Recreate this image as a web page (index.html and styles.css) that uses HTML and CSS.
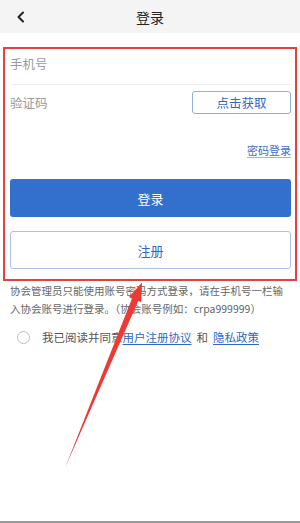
FILE: index.html
```html
<!DOCTYPE html>
<html lang="zh-CN">
<head>
<meta charset="utf-8">
<title>登录</title>
<link rel="stylesheet" href="styles.css">
</head>
<body>
<header class="topbar">
  <span class="back">
    <svg width="10" height="12" viewBox="0 0 10 12"><polyline points="7,1.5 2.5,6 7,10.5" fill="none" stroke="#222" stroke-width="2" stroke-linecap="round" stroke-linejoin="round"/></svg>
  </span>
  <h1 class="title">登录</h1>
  <span></span>
</header>

<section class="form">
  <div class="field phone">手机号</div>
  <div class="divider"></div>
  <div class="field code">
    <span>验证码</span>
    <button class="get-code">点击获取</button>
  </div>
  <div class="switch"><a class="pwd-link">密码登录</a></div>
  <button class="btn primary">登录</button>
  <button class="btn outline">注册</button>
</section>

<p class="note">协会管理员只能使用账号密码方式登录，请在手机号一栏输入协会账号进行登录。（协会账号例如：crpa999999）</p>

<div class="agree">
  <span class="radio"></span>
  <span class="agree-text">我已阅读并同意<a class="link">用户注册协议</a><span class="and">和</span><a class="link">隐私政策</a></span>
</div>

<div class="bottom-line"></div>

<svg class="arrow" width="300" height="523" viewBox="0 0 300 523">
  <polygon points="142,282.5 141.2,302.2 138.2,300.9 65,468 132,298.5 129,297" fill="#ec3a35"/>
</svg>
</body>
</html>
```

FILE: styles.css
```css
* { box-sizing: border-box; }
html, body { margin: 0; padding: 0; }
body {
  width: 300px;
  min-height: 523px;
  background: #fff;
  font-family: "Noto Sans CJK SC", "Noto Sans", sans-serif;
  display: flex;
  flex-direction: column;
  position: relative;
  overflow: hidden;
}
.topbar {
  height: 33px;
  background: #f4f4f4;
  display: grid;
  grid-template-columns: 40px 1fr 40px;
  align-items: center;
}
.back {
  display: flex;
  justify-content: center;
  align-items: center;
  padding-left: 2px;
}
.back svg { display: block; }
.title {
  margin: 0;
  text-align: center;
  font-size: 14px;
  font-weight: 400;
  color: #222;
  line-height: 20px;
}
.form {
  margin: 14px 0 0 3px;
  width: 294px;
  border: 2px solid #e8403c;
  padding: 0 4px 10px 5px;
  display: flex;
  flex-direction: column;
}
.field {
  font-size: 12.5px;
  color: #9a9a9a;
  line-height: 20px;
}
.phone { padding: 5px 0 10px; }
.divider {
  height: 1px;
  background: #eeeeee;
  margin: 0 0 0 2px;
}
.code {
  display: flex;
  justify-content: space-between;
  align-items: center;
  padding-top: 6px;
}
.get-code {
  width: 99px;
  height: 23px;
  border: 1px solid #8fb0e0;
  border-radius: 3px;
  background: #fff;
  color: #2f68c4;
  font-family: inherit;
  font-size: 12.5px;
  padding: 0;
  line-height: 21px;
}
.switch {
  display: flex;
  justify-content: flex-end;
  margin-top: 28px;
  line-height: 16px;
}
.pwd-link {
  font-size: 11px;
  color: #3d6fc2;
  text-decoration: underline;
  text-decoration-color: #9bb6e0;
  text-underline-offset: 2px;
}
.btn {
  height: 38px;
  width: 100%;
  border-radius: 3px;
  font-family: inherit;
  font-size: 13px;
  padding: 0;
}
.primary {
  margin-top: 21px;
  background: #336fcc;
  border: none;
  color: #fff;
}
.outline {
  margin-top: 14px;
  background: #fff;
  border: 1px solid #a9c2e8;
  color: #2f68c4;
}
.note {
  margin: 1px 0 0 10px;
  width: 280px;
  font-size: 10.5px;
  line-height: 18px;
  color: #666;
}
.agree {
  margin-top: 9px;
  display: flex;
  align-items: center;
  height: 20px;
  padding-left: 17px;
}
.radio {
  width: 13px;
  height: 13px;
  border: 1px solid #bdbdbd;
  border-radius: 50%;
  margin-right: 12px;
  flex: none;
}
.agree-text {
  font-size: 11.5px;
  color: #555;
  line-height: 20px;
}
.link {
  color: #2f68c4;
  text-decoration: underline;
  text-underline-offset: 2px;
}
.and { margin: 0 5px; }
.bottom-line {
  margin-top: auto;
  height: 2px;
  background: #9a9a9a;
  margin-bottom: 0;
}
.arrow {
  position: absolute;
  left: 0;
  top: 0;
  pointer-events: none;
}
```
